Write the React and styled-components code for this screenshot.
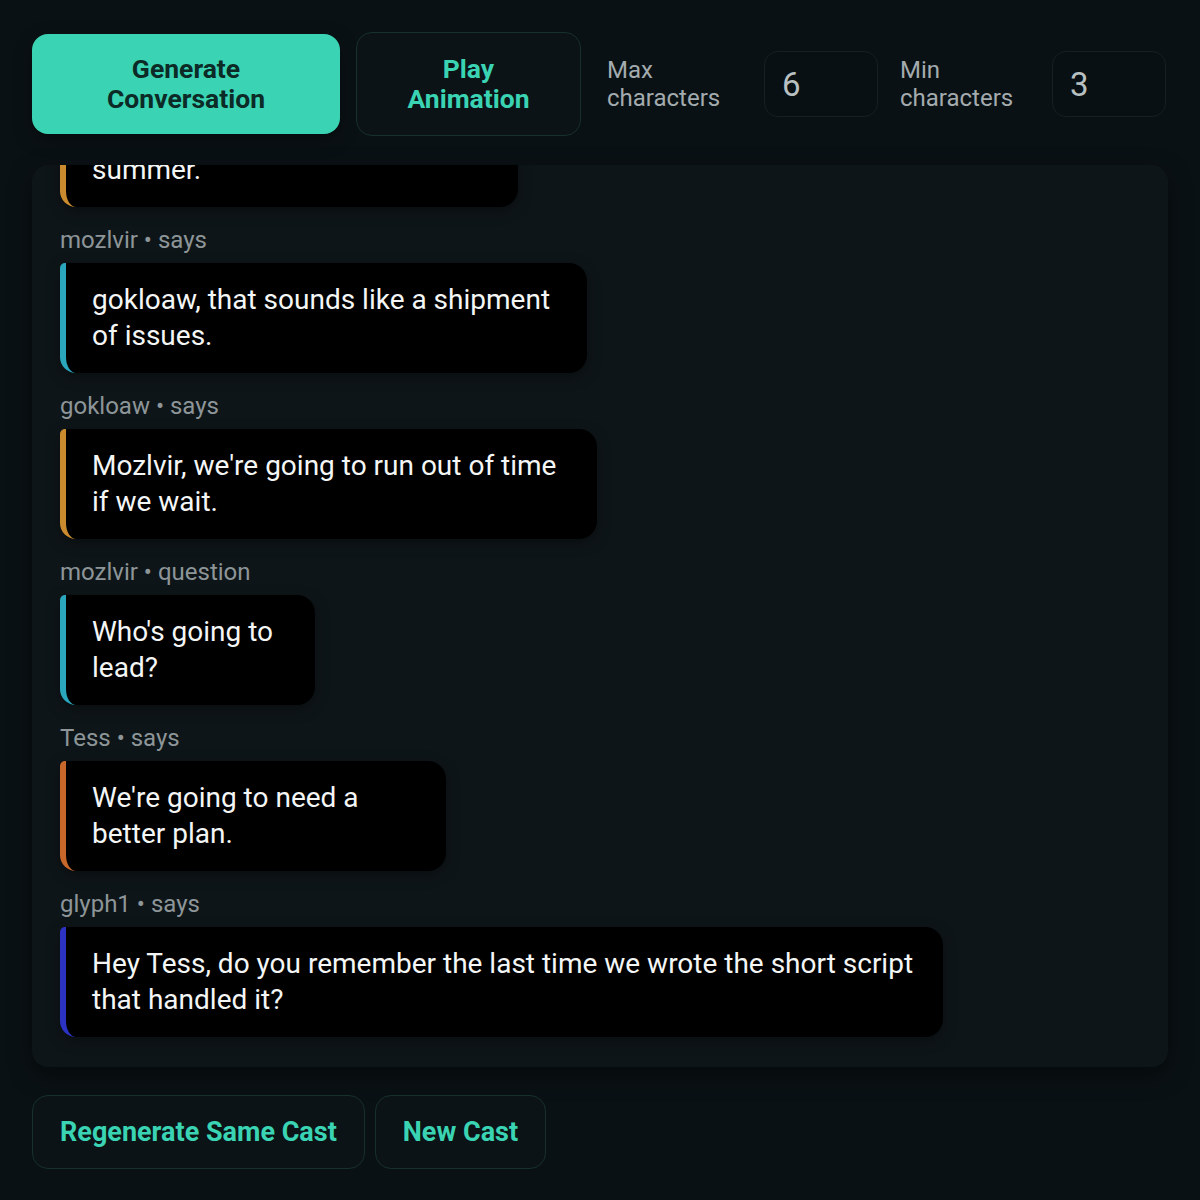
import styled, { createGlobalStyle } from "styled-components";

const GlobalStyle = createGlobalStyle`
  html, body {
    margin: 0;
    padding: 0;
    background: #0a1114;
  }
  body {
    font-family: Roboto, 'Liberation Sans', sans-serif;
    color: #e8eced;
  }
`

const Page = styled.div`
  width: 1200px;
  height: 1200px;
  box-sizing: border-box;
  padding: 32px 32px 0 32px;
  display: flex;
  flex-direction: column;
`

const Toolbar = styled.div`
  display: grid;
  grid-template-columns: 308px 225px 151px 114px 142px 114px;
  column-gap: 16px;
  align-items: center;
  height: 104px;
`

const PrimaryButton = styled.button`
  height: 100px;
  padding: 0;
  border: none;
  border-radius: 16px;
  background: #3ad3b3;
  color: #0c2a26;
  font-family: Roboto, sans-serif;
  font-weight: 700;
  font-size: 26.5px;
  line-height: 30px;
  box-shadow: 0 6px 18px rgba(0, 0, 0, 0.35);
`

const OutlineButton = styled.button`
  height: ${p => p.$height || 104}px;
  padding: 0 27px;
  border: 1px solid #17302c;
  border-radius: 16px;
  background: #0b1316;
  color: #3ad3b3;
  font-family: Roboto, sans-serif;
  font-weight: 700;
  font-size: ${p => p.$size || 26.5}px;
  line-height: 30px;
  white-space: ${p => (p.$nowrap ? 'nowrap' : 'normal')};
`

const FieldLabel = styled.label`
  padding-left: ${p => p.$inset}px;
  color: #a3abae;
  font-size: 24px;
  line-height: 28px;
`

const NumberBox = styled.div`
  height: 66px;
  box-sizing: border-box;
  padding: 0 17px;
  display: flex;
  align-items: center;
  border: 1px solid #161f22;
  border-radius: 14px;
  background: #091013;
  color: #b8c0c2;
  font-size: 33px;
`

const ChatPanel = styled.div`
  margin-top: 29px;
  height: 902px;
  box-sizing: border-box;
  padding: 0 28px 30px 28px;
  border-radius: 16px;
  background: #0e1518;
  box-shadow: 0 8px 24px rgba(0, 0, 0, 0.45);
  overflow: hidden;
  display: flex;
  flex-direction: column;
  justify-content: flex-end;
`

const Message = styled.div`
  display: flex;
  flex-direction: column;
  gap: 10px;
  & + & {
    margin-top: 20px;
  }
`

const Speaker = styled.div`
  color: #8d9598;
  font-size: 24px;
  line-height: 26px;
`

const Bubble = styled.div`
  width: ${p => p.$width}px;
  box-sizing: border-box;
  padding: 19px 26px 19px 26px;
  border-left: 6px solid ${p => p.$accent};
  border-radius: 5px 18px 18px 16px;
  background: #000;
  color: #f4f6f6;
  font-size: 28px;
  line-height: 36px;
  box-shadow: 0 4px 14px rgba(0, 0, 0, 0.35);
`

const Footer = styled.div`
  margin-top: 28px;
  display: flex;
  gap: 10px;
`

const accents = {
  gokloaw: '#c98b2d',
  mozlvir: '#2aa6bd',
  Tess: '#c8672a',
  glyph1: '#2c32c2',
}

const lines = [
  { who: 'gokloaw', kind: 'says', width: 458, text: "It has to ship before the end of summer." },
  { who: 'mozlvir', kind: 'says', width: 527, text: 'gokloaw, that sounds like a shipment of issues.' },
  { who: 'gokloaw', kind: 'says', width: 537, text: "Mozlvir, we're going to run out of time if we wait." },
  { who: 'mozlvir', kind: 'question', width: 255, text: "Who's going to lead?" },
  { who: 'Tess', kind: 'says', width: 386, text: "We're going to need a better plan." },
  { who: 'glyph1', kind: 'says', width: 883, text: 'Hey Tess, do you remember the last time we wrote the short script that handled it?' },
]

export default function App() {
  return (
    <>
      <GlobalStyle />
      <Page>
        <Toolbar>
          <PrimaryButton>Generate<br />Conversation</PrimaryButton>
          <OutlineButton>Play<br />Animation</OutlineButton>
          <FieldLabel $inset={10}>Max<br />characters</FieldLabel>
          <NumberBox>6</NumberBox>
          <FieldLabel $inset={6}>Min<br />characters</FieldLabel>
          <NumberBox>3</NumberBox>
        </Toolbar>

        <ChatPanel>
          {lines.map((line, i) => (
            <Message key={i}>
              <Speaker>{line.who} • {line.kind}</Speaker>
              <Bubble $accent={accents[line.who]} $width={line.width}>
                {line.text}
              </Bubble>
            </Message>
          ))}
        </ChatPanel>

        <Footer>
          <OutlineButton $height={74} $size={27} $nowrap>Regenerate Same Cast</OutlineButton>
          <OutlineButton $height={74} $size={27} $nowrap>New Cast</OutlineButton>
        </Footer>
      </Page>
    </>
  )
}
